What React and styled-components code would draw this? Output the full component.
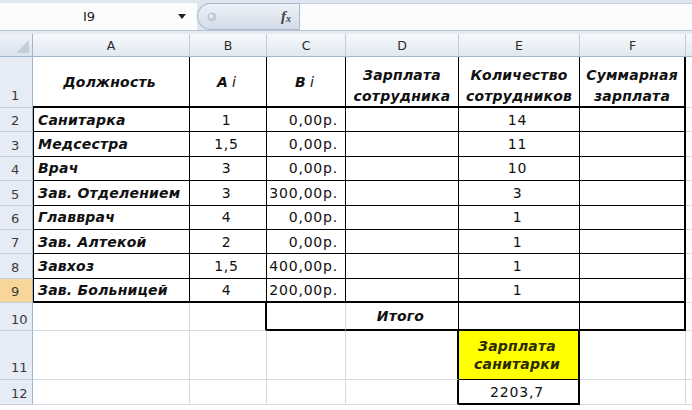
import React from "react";
import styled, { createGlobalStyle } from "styled-components";

const GlobalStyle = createGlobalStyle`
  html, body {
    margin: 0;
    padding: 0;
    background: #ffffff;
    overflow: hidden;
  }
  body {
    font-family: "DejaVu Sans", sans-serif;
  }
`;

const Page = styled.div`
  width: 692px;
  height: 410px;
  background: #ffffff;
  overflow: hidden;
`;

// ---- formula bar ----
const FormulaBar = styled.div`
  display: flex;
  height: 31px;
  box-sizing: border-box;
  padding-top: 3px;
  background: #dfe6ef;
  border-bottom: 1px solid #b6c4d6;
`;

const NameBox = styled.div`
  width: 197px;
  display: flex;
  align-items: center;
  background: #fbfcfd;
  font-family: "DejaVu Sans", sans-serif;
  font-size: 13px;
  color: #222;
`;

const NameText = styled.span`
  flex: 1;
  text-align: center;
`;

const DropArrow = styled.span`
  width: 0;
  height: 0;
  margin-right: 11px;
  border-left: 4px solid transparent;
  border-right: 4px solid transparent;
  border-top: 5px solid #222;
`;

const FxPill = styled.div`
  width: 102px;
  box-sizing: border-box;
  display: flex;
  align-items: center;
  justify-content: space-between;
  padding: 0 8px 0 9px;
  border: 1px solid #a9b9cc;
  border-right: none;
  border-radius: 14px 0 0 14px;
  background: linear-gradient(#eef2f8, #d3dce8);
`;

const FxLabel = styled.span`
  font-family: "Liberation Serif", serif;
  font-style: italic;
  font-weight: bold;
  font-size: 15px;
  color: #444;
  sub {
    font-size: 10px;
    vertical-align: -1px;
  }
`;

const FormulaInput = styled.div`
  flex: 1;
  background: #fbfcfd;
  border-left: 1px solid #a9b9cc;
  border-top: 1px solid #c3cfdd;
`;

const Spacer = styled.div`
  height: 3px;
  background: #e4eaf2;
`;

// ---- sheet grid ----
const Sheet = styled.div`
  display: grid;
  grid-template-columns: 33px 157px 77px 79px 113px 121px 106px 1fr;
  grid-template-rows: 23px 51px repeat(8, 24.4px) 28px 49px 25px 1fr;
  height: 376px;
`;

const Corner = styled.div`
  position: relative;
  background: linear-gradient(#eef2f8, #dbe3ee);
  border-right: 1px solid #9eb6ce;
  border-bottom: 1px solid #9eb6ce;
  &::after {
    content: "";
    position: absolute;
    right: 3px;
    bottom: 3px;
    border-left: 13px solid transparent;
    border-bottom: 13px solid #c3cedb;
  }
`;

const ColHead = styled.div`
  display: flex;
  align-items: center;
  justify-content: center;
  box-sizing: border-box;
  background: linear-gradient(#f7f9fc, #e1e8f1);
  border-right: 1px solid #c0ccdb;
  border-bottom: 1px solid #9eb6ce;
  font-size: 12.5px;
  color: #2a2a2a;
`;

const RowHead = styled.div`
  display: flex;
  align-items: flex-end;
  box-sizing: border-box;
  padding: 0 0 ${(p) => (p.$tall ? 4 : 3)}px 11px;
  background: ${(p) => (p.$active ? "#f8d69a" : "#e6ecf5")};
  border-right: 1px solid #9eb6ce;
  border-bottom: 1px solid #c5d1df;
  font-size: 13px;
  color: #3a3a3a;
`;

const grid = "1px solid #d6dbe3";

const Cell = styled.div`
  display: flex;
  flex-direction: column;
  justify-content: ${(p) => (p.$top ? "flex-start" : "center")};
  align-items: ${(p) =>
    p.$align === "left" ? "flex-start" : p.$align === "right" ? "flex-end" : "center"};
  box-sizing: border-box;
  padding: ${(p) => (p.$top ? "8px 3px 0" : "0 7px 0 4px")};
  background: ${(p) => p.$fill || "#ffffff"};
  border-right: ${(p) => p.$r || grid};
  border-bottom: ${(p) => p.$b || grid};
  border-left: ${(p) => p.$l || "none"};
  font-family: "DejaVu Sans", sans-serif;
  font-size: 14px;
  letter-spacing: ${(p) => (p.$strong ? "0.2px" : "0.8px")};
  font-weight: ${(p) => (p.$strong ? "bold" : "normal")};
  font-style: ${(p) => (p.$strong ? "italic" : "normal")};
  line-height: ${(p) => (p.$top ? "21px" : "18px")};
  color: ${(p) => p.$color || "#111"};
  white-space: nowrap;
`;

const Thin = styled.span`
  font-weight: normal;
  margin-left: 4px;
`;

const B1 = "1px solid #000";
const B2 = "2px solid #000";

const positions = [
  "Санитарка",
  "Медсестра",
  "Врач",
  "Зав. Отделением",
  "Главврач",
  "Зав. Алтекой",
  "Завхоз",
  "Зав. Больницей",
];
const ai = ["1", "1,5", "3", "3", "4", "2", "1,5", "4"];
const bi = ["0,00р.", "0,00р.", "0,00р.", "300,00р.", "0,00р.", "0,00р.", "400,00р.", "200,00р."];
const count = ["14", "11", "10", "3", "1", "1", "1", "1"];

const NameBoxIcon = () => (
  <svg width="10" height="10" viewBox="0 0 10 10">
    <circle cx="5" cy="5" r="4" fill="#c9d2de" stroke="#b2bdcc" strokeWidth="0.8" />
    <circle cx="4" cy="4" r="1.5" fill="#f4f6f9" />
  </svg>
);

const App = () => {
  return (
    <Page>
      <GlobalStyle />
      <FormulaBar>
        <NameBox>
          <NameText>I9</NameText>
          <DropArrow />
        </NameBox>
        <FxPill>
          <NameBoxIcon />
          <FxLabel>
            f<sub>x</sub>
          </FxLabel>
        </FxPill>
        <FormulaInput />
      </FormulaBar>
      <Spacer />
      <Sheet>
        <Corner />
        {["A", "B", "C", "D", "E", "F", ""].map((c, i) => (
          <ColHead key={i}>{c}</ColHead>
        ))}

        <RowHead $tall>1</RowHead>
        <Cell $strong $b={B2} $r={B1}>Должность</Cell>
        <Cell $strong $b={B2} $r={B1}>
          <span>
            A<Thin>i</Thin>
          </span>
        </Cell>
        <Cell $strong $b={B2} $r={B1}>
          <span>
            B<Thin>i</Thin>
          </span>
        </Cell>
        <Cell $strong $top $b={B2} $r={B1}>
          <span>Зарплата</span>
          <span>сотрудника</span>
        </Cell>
        <Cell $strong $top $b={B2} $r={B1}>
          <span>Количество</span>
          <span>сотрудников</span>
        </Cell>
        <Cell $strong $top $b={B2} $r={B2}>
          <span>Суммарная</span>
          <span>зарплата</span>
        </Cell>
        <Cell />

        {positions.map((name, i) => {
          const last = i === positions.length - 1;
          const bottom = last ? B2 : B1;
          return (
            <React.Fragment key={name}>
              <RowHead $active={last}>{i + 2}</RowHead>
              <Cell $strong $align="left" $l={B1} $r={B1} $b={bottom}>
                {name}
              </Cell>
              <Cell $r={B1} $b={bottom}>{ai[i]}</Cell>
              <Cell $align="right" $r={B1} $b={bottom}>
                {bi[i]}
              </Cell>
              <Cell $r={B1} $b={bottom} />
              <Cell $r={B1} $b={bottom}>{count[i]}</Cell>
              <Cell $r={B2} $b={bottom} />
              <Cell />
            </React.Fragment>
          );
        })}

        <RowHead>10</RowHead>
        <Cell />
        <Cell $r={B2} />
        <Cell $b={B2} />
        <Cell $strong $r={B1} $b={B2}>
          Итого
        </Cell>
        <Cell $r={B1} $b={B2} />
        <Cell $r={B2} $b={B2} />
        <Cell />

        <RowHead $tall>11</RowHead>
        <Cell />
        <Cell />
        <Cell />
        <Cell $r={B2} />
        <Cell $strong $fill="#ffff00" $color="#2b2b00" $r={B2} $b={B1}>
          <span>Зарплата</span>
          <span>санитарки</span>
        </Cell>
        <Cell />
        <Cell />

        <RowHead>12</RowHead>
        <Cell />
        <Cell />
        <Cell />
        <Cell $r={B2} />
        <Cell $r={B2} $b={B2}>2203,7</Cell>
        <Cell />
        <Cell />
      </Sheet>
    </Page>
  );
};

export default App;
